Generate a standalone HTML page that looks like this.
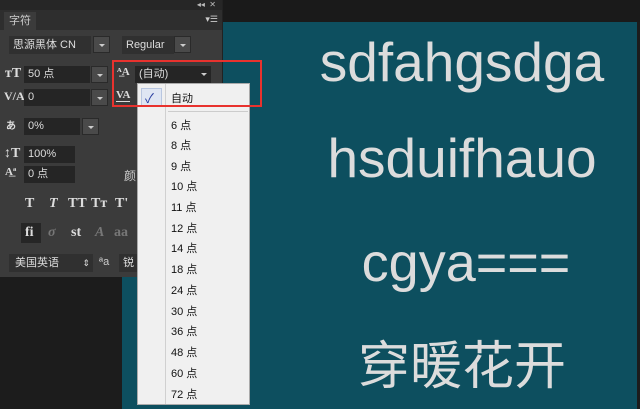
<!DOCTYPE html>
<html><head><meta charset="utf-8"><style>
*{margin:0;padding:0;box-sizing:border-box}
body{width:640px;height:409px;overflow:hidden;background:#1c1c1c;position:relative;font-family:"Liberation Sans","Noto Sans CJK SC",sans-serif}
.a{position:absolute}
.canvas{left:122px;top:22px;width:515px;height:387px;background:#0d4f5f}
.ct{position:absolute;left:297px;width:330px;text-align:center;color:#dcdcdc;font-family:"Liberation Sans","Noto Sans CJK SC",sans-serif;white-space:nowrap}
.panel{left:0;top:0;width:223px;height:277px;background:#3b3b3b;border-right:1px solid #222}
.fld{position:absolute;background:#252525;color:#ddd;font-size:11px;line-height:17px;padding-left:4px;height:17px}
.btn{position:absolute;background:#4a4a4a;width:17px;height:17px;border:1px solid #2a2a2a}
.btn:after{content:"";position:absolute;left:5px;top:7px;border:3px solid transparent;border-top:3px solid #ccc}
.lbl{position:absolute;color:#ccc;font-size:12px}
.menu{left:137px;top:83px;width:113px;height:322px;background:#f0f0f0;border:1px solid #aaa}
.mi{position:absolute;left:33px;font-size:11px;color:#111}
.gl{position:absolute;font-family:"Liberation Serif",serif;color:#ddd;font-size:14px;font-weight:bold}
</style></head><body>
<div class="a" style="left:0;top:0;width:640px;height:22px;background:#1a1a1a"></div>
<div class="a canvas"></div>
<div class="ct" style="top:30px;font-size:55px">sdfahgsdga</div>
<div class="ct" style="top:126px;font-size:55px">hsduifhauo</div>
<div class="ct" style="top:232px;font-size:54px;left:301px">cgya===</div>
<div class="ct" style="top:324px;font-size:52px">穿暖花开</div>

<div class="a panel">
 <div class="a" style="left:0;top:0;width:222px;height:10px;background:#262626"></div>
 <div class="a" style="right:6px;top:0;font-size:8px;color:#bbb">◂◂ &nbsp;✕</div>
 <div class="a" style="left:0;top:10px;width:222px;height:20px;background:#2e2e2e"></div>
 <div class="a" style="left:4px;top:12px;width:32px;height:18px;background:#3b3b3b;color:#ccc;font-size:11px;line-height:18px;padding-left:5px">字符</div>
 <div class="a" style="right:4px;top:14px;font-size:9px;color:#ccc">▾☰</div>
 <div class="fld" style="left:9px;top:36px;width:82px;height:18px;line-height:18px;background:#303030">思源黑体 CN</div>
 <div class="btn" style="left:93px;top:36px"></div>
 <div class="fld" style="left:122px;top:36px;width:52px;height:18px;line-height:18px;background:#303030">Regular</div>
 <div class="btn" style="left:174px;top:36px"></div>
 <div class="gl" style="left:5px;top:66px">ᴛT</div>
 <div class="fld" style="left:24px;top:66px;width:66px">50 点</div><div class="btn" style="left:91px;top:66px"></div>
 <div class="gl" style="left:4px;top:89px;font-size:12px">V/A</div>
 <div class="fld" style="left:24px;top:89px;width:66px">0</div><div class="btn" style="left:91px;top:89px"></div>
 <div class="gl" style="left:117px;top:66px;font-size:11px">ᴬ̲A</div>
 <div class="fld" style="left:135px;top:66px;width:76px">(自动)</div>
 <div class="a" style="left:201px;top:73px;border:3px solid transparent;border-top-color:#ccc"></div>
 <div class="gl" style="left:116px;top:89px;font-size:11px;border-bottom:1px solid #ddd">VA</div>
 <div class="gl" style="left:6px;top:117px;font-size:10px">あ</div>
 <div class="fld" style="left:24px;top:118px;width:56px">0%</div><div class="btn" style="left:82px;top:118px"></div>
 <div class="gl" style="left:4px;top:146px">↕T</div>
 <div class="fld" style="left:24px;top:146px;width:51px">100%</div>
 <div class="gl" style="left:5px;top:166px;font-size:11px">A͟ª</div>
 <div class="fld" style="left:24px;top:166px;width:51px">0 点</div>
 <div class="lbl" style="left:124px;top:167px">颜</div>
 <div class="gl" style="left:25px;top:196px">T</div>
 <div class="gl" style="left:49px;top:196px;font-style:italic">T</div>
 <div class="gl" style="left:68px;top:196px">TT</div>
 <div class="gl" style="left:91px;top:196px">Tт</div>
 <div class="gl" style="left:115px;top:196px">T'</div>
 <div class="a" style="left:21px;top:223px;width:20px;height:20px;background:#262626"></div>
 <div class="gl" style="left:25px;top:225px">fi</div>
 <div class="gl" style="left:48px;top:225px;color:#777;font-style:italic">σ</div>
 <div class="gl" style="left:71px;top:225px">st</div>
 <div class="gl" style="left:95px;top:225px;color:#777;font-style:italic">A</div>
 <div class="gl" style="left:114px;top:225px;color:#777">aa</div>
 <div class="fld" style="left:9px;top:254px;width:84px;height:18px;line-height:18px;background:#303030;padding-left:6px">美国英语 <span style="float:right;margin-right:3px;font-size:9px">⇕</span></div>
 <div class="lbl" style="left:99px;top:256px;font-size:11px">ªa</div>
 <div class="fld" style="left:119px;top:254px;width:30px;height:18px;line-height:18px;background:#303030">锐</div>
</div>

<div class="a menu">
 <div class="a" style="left:27px;top:0;width:1px;height:320px;background:#d0d0d0"></div>
 <div class="a" style="left:3px;top:4px;width:21px;height:19px;background:#dfe6f3;border:1px solid #b8c6e0"></div>
 <div class="a" style="left:7px;top:4px;color:#2a3fa0;font-size:13px">✓</div>
 <div class="mi" style="top:6px">自动</div>
 <div class="a" style="left:30px;top:27px;width:80px;height:1px;background:#ccc"></div>
 <div class="mi" style="top:33px">6 点</div>
 <div class="mi" style="top:53px">8 点</div>
 <div class="mi" style="top:74px">9 点</div>
 <div class="mi" style="top:94px">10 点</div>
 <div class="mi" style="top:115px">11 点</div>
 <div class="mi" style="top:136px">12 点</div>
 <div class="mi" style="top:156px">14 点</div>
 <div class="mi" style="top:177px">18 点</div>
 <div class="mi" style="top:198px">24 点</div>
 <div class="mi" style="top:219px">30 点</div>
 <div class="mi" style="top:239px">36 点</div>
 <div class="mi" style="top:260px">48 点</div>
 <div class="mi" style="top:281px">60 点</div>
 <div class="mi" style="top:302px">72 点</div>
</div>
<div class="a" style="left:112px;top:60px;width:150px;height:47px;border:2px solid #e8322e"></div>
</body></html>
